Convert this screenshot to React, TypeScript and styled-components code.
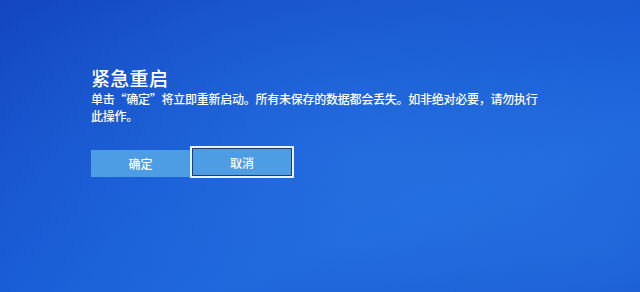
import styled, { createGlobalStyle } from 'styled-components'

const GlobalStyle = createGlobalStyle`
  html, body {
    margin: 0;
    padding: 0;
    background: #1653c8;
  }
`

export default function App() {
  return (
    <Screen>
      <GlobalStyle />
      <Dialog>
        <Title>紧急重启</Title>
        <Message>
          单击“确定”将立即重新启动。所有未保存的数据都会丢失。如非绝对必要，请勿执行此操作。
        </Message>
        <Actions>
          <Button>确定</Button>
          <Button focused>取消</Button>
        </Actions>
      </Dialog>
    </Screen>
  )
}

const Screen = styled.div`
  width: 640px;
  height: 292px;
  overflow: hidden;
  box-sizing: border-box;
  padding: 66px 0 0 91px;
  background:
    radial-gradient(ellipse 420px 260px at 360px 160px, rgba(45, 125, 232, 0.5), rgba(45, 125, 232, 0) 100%),
    radial-gradient(ellipse 300px 200px at 610px 250px, rgba(40, 115, 228, 0.45), rgba(40, 115, 228, 0) 100%),
    linear-gradient(160deg, #1346c0 0%, #1858d2 45%, #1b63da 70%, #1652cb 100%);
  font-family: "Noto Sans CJK SC", "Noto Sans", sans-serif;
  color: #ffffff;
`

const Dialog = styled.div`
  display: flex;
  flex-direction: column;
`

const Title = styled.h1`
  margin: 0;
  font-size: 19px;
  line-height: 24px;
  font-weight: 500;
  letter-spacing: 0.3px;
`

const Message = styled.p`
  margin: 0;
  width: 450px;
  font-size: 12px;
  line-height: 17px;
  font-weight: 500;
  letter-spacing: -0.25px;
`

const Actions = styled.div`
  display: flex;
  align-items: center;
  margin-top: 24px;
`

const Button = styled.button<{ focused?: boolean }>`
  box-sizing: border-box;
  width: ${(p) => (p.focused ? '104px' : '99px')};
  height: ${(p) => (p.focused ? '32px' : '27px')};
  padding: 0;
  border: ${(p) => (p.focused ? '2px solid #e8f2ff' : 'none')};
  box-shadow: ${(p) => (p.focused ? 'inset 0 0 0 1px #1b3e78' : 'none')};
  background: #4c9de3;
  color: #ffffff;
  font-family: "Noto Sans CJK SC", "Noto Sans", sans-serif;
  font-size: 12px;
  font-weight: 500;
  margin-top: ${(p) => (p.focused ? '-2px' : '0')};
`
